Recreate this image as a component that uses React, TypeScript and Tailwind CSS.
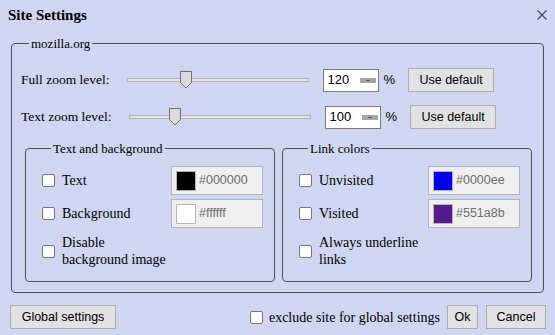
import React from "react";

const serif = "font-['Liberation_Serif',serif]";
const sans = "font-['Liberation_Sans',sans-serif]";

function Checkbox() {
	return (
		<span className="block w-[13px] h-[13px] shrink-0 bg-white border border-[#767676] rounded-[2px]"></span>
	);
}

function Button({ label, width }: { label: string; width: string }) {
	return (
		<button
			type="button"
			className={`${sans} ${width} h-[24px] shrink-0 flex items-center justify-center bg-[#e1e1e1] border border-[#adadad] text-[12.5px] text-black`}
		>
			{label}
		</button>
	);
}

function Slider({ thumb }: { thumb: number }) {
	return (
		<div className="relative ml-[17px] w-[182px] h-[18px] shrink-0">
			<div className="absolute left-0 right-0 top-[7px] h-[4px] bg-[#e6e6e6] border border-[#b4b4b4]"></div>
			<svg
				className="absolute top-0"
				style={{ left: thumb }}
				width="12"
				height="18"
				viewBox="0 0 12 18"
			>
				<path
					d="M0.5 0.5 H11.5 V11.5 L6 17 L0.5 11.5 Z"
					fill="#dadada"
					stroke="#707070"
					strokeWidth="1"
				/>
			</svg>
		</div>
	);
}

function ZoomRow({ label, value, thumb }: { label: string; value: string; thumb: number }) {
	return (
		<div className="flex items-center h-[24px]">
			<span className={`${serif} text-[13.5px]`}>{label}</span>
			<Slider thumb={thumb} />
			<div className="ml-[14px] w-[56px] h-[23px] shrink-0 flex items-center justify-between pl-[4px] pr-[2px] bg-white border border-[#7a7a7a]">
				<span className={`${sans} text-[13px] text-black`}>{value}</span>
				<span className="w-[16px] h-[5px] bg-[#a6a6a6] flex items-center justify-center">
					<span className="w-[4px] h-[1px] bg-[#555]"></span>
				</span>
			</div>
			<span className={`${sans} ml-[5px] text-[13px]`}>%</span>
			<div className="ml-[13px]">
				<Button label="Use default" width="w-[86px]" />
			</div>
		</div>
	);
}

function ColorBox({ color, hex }: { color: string; hex: string }) {
	return (
		<div className="w-[92px] h-[29px] shrink-0 flex items-center gap-[3px] pl-[4px] bg-[#efefef] border border-[#b4b4b4]">
			<span
				className="block w-[20px] h-[20px] border border-[#b4b4b4]"
				style={{ background: color }}
			></span>
			<span className={`${sans} text-[12.5px] text-[#6d6d6d]`}>{hex}</span>
		</div>
	);
}

function ColorRow({ label, color, hex }: { label: string; color: string; hex: string }) {
	return (
		<div className="flex items-center h-[29px]">
			<Checkbox />
			<span className={`${serif} ml-[7px] flex-1 text-[14px]`}>{label}</span>
			<ColorBox color={color} hex={hex} />
		</div>
	);
}

function Group({
	title,
	rows,
	extra,
}: {
	title: string;
	rows: { label: string; color: string; hex: string }[];
	extra: [string, string];
}) {
	return (
		<fieldset className="w-[250px] border border-[#505050] rounded-[4px] pl-[16px] pr-[11px] pt-[10px] pb-[13px]">
			<legend className={`${serif} ml-[9px] px-[2px] text-[13px] leading-[15px]`}>{title}</legend>
			<div className="flex flex-col gap-[4px]">
				{rows.map((r) => (
					<ColorRow key={r.label} label={r.label} color={r.color} hex={r.hex} />
				))}
			</div>
			<div className="flex items-center mt-[6px]">
				<Checkbox />
				<div className={`${serif} ml-[7px] text-[14px] leading-[17px] whitespace-nowrap`}>
					<div>{extra[0]}</div>
					<div>{extra[1]}</div>
				</div>
			</div>
		</fieldset>
	);
}

export default function App() {
	return (
		<div className={`${serif} w-[555px] h-[335px] bg-[#cfd6f2] text-black overflow-hidden`}>
			{/* Header */}
			<div className="flex items-center justify-between h-[30px] px-[8px]">
				<h1 className="text-[15px] font-bold">Site Settings</h1>
				<svg width="10" height="10" viewBox="0 0 10 10">
					<path d="M0.5 0.5 L9.5 9.5 M9.5 0.5 L0.5 9.5" stroke="#444" strokeWidth="1.1" />
				</svg>
			</div>

			{/* Site fieldset */}
			<fieldset className="mx-[11px] mt-[6px] border border-[#505050] rounded-[4px] pl-[9px] pr-[11px] pt-[17px] pb-[10px]">
				<legend className="ml-[8px] px-[2px] text-[13px] leading-[15px]">mozilla.org</legend>
				<ZoomRow label="Full zoom level:" value="120" thumb={53} />
				<div className="mt-[13px]">
					<ZoomRow label="Text zoom level:" value="100" thumb={40} />
				</div>
				<div className="flex gap-[7px] mt-[12px] ml-[4px]">
					<Group
						title="Text and background"
						rows={[
							{ label: "Text", color: "#000000", hex: "#000000" },
							{ label: "Background", color: "#ffffff", hex: "#ffffff" },
						]}
						extra={["Disable", "background image"]}
					/>
					<Group
						title="Link colors"
						rows={[
							{ label: "Unvisited", color: "#0000ee", hex: "#0000ee" },
							{ label: "Visited", color: "#551a8b", hex: "#551a8b" },
						]}
						extra={["Always underline", "links"]}
					/>
				</div>
			</fieldset>

			{/* Footer */}
			<div className="flex items-center h-[24px] mt-[12px] pl-[10px] pr-[9px]">
				<Button label="Global settings" width="w-[106px]" />
				<div className="flex-1"></div>
				<Checkbox />
				<span className="ml-[6px] text-[14px]">exclude site for global settings</span>
				<div className="ml-[7px]">
					<Button label="Ok" width="w-[31px]" />
				</div>
				<div className="ml-[8px]">
					<Button label="Cancel" width="w-[60px]" />
				</div>
			</div>
		</div>
	);
}
